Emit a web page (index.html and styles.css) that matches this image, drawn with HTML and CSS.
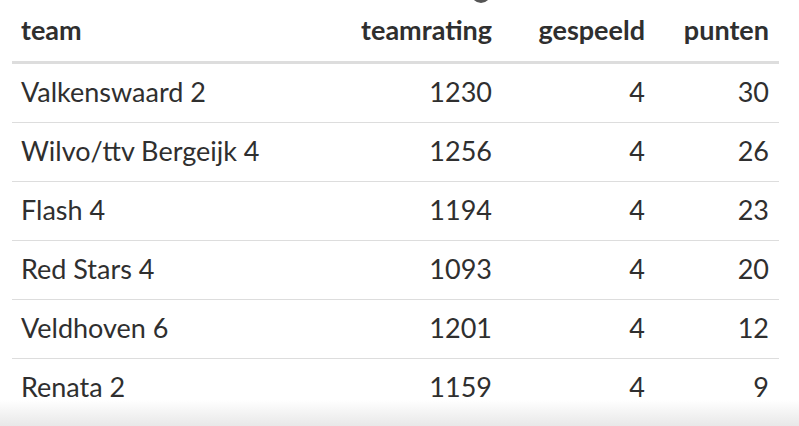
FILE: index.html
```html
<!DOCTYPE html>
<html lang="nl">
<head>
<meta charset="utf-8">
<title>Stand</title>
<link rel="stylesheet" href="styles.css">
</head>
<body>
<div class="page">
  <span class="dot"></span>
  <table class="standings">
    <colgroup>
      <col class="c-team"><col class="c-rating"><col class="c-played"><col class="c-points">
    </colgroup>
    <thead>
      <tr><th class="left">team</th><th>teamrating</th><th>gespeeld</th><th>punten</th></tr>
    </thead>
    <tbody>
      <tr><td class="left">Valkenswaard 2</td><td>1230</td><td>4</td><td>30</td></tr>
      <tr><td class="left">Wilvo/ttv Bergeijk 4</td><td>1256</td><td>4</td><td>26</td></tr>
      <tr><td class="left">Flash 4</td><td>1194</td><td>4</td><td>23</td></tr>
      <tr><td class="left">Red Stars 4</td><td>1093</td><td>4</td><td>20</td></tr>
      <tr><td class="left">Veldhoven 6</td><td>1201</td><td>4</td><td>12</td></tr>
      <tr><td class="left">Renata 2</td><td>1159</td><td>4</td><td>9</td></tr>
    </tbody>
  </table>
  <div class="fade"></div>
</div>
</body>
</html>
```
FILE: styles.css
```css
html, body {
  margin: 0;
  padding: 0;
  background: #fff;
}
.page {
  position: relative;
  width: 799px;
  height: 426px;
  overflow: hidden;
  font-family: Lato, "Open Sans", sans-serif;
  color: #2f2f2f;
}
.dot {
  position: absolute;
  left: 471px;
  top: -17px;
  width: 20px;
  height: 20px;
  border-radius: 50%;
  background: #555;
}
.standings {
  margin-left: 12px;
  width: 767px;
  border-collapse: collapse;
  table-layout: fixed;
}
.c-team { width: 340px; }
.c-rating { width: 150px; }
.c-played { width: 153px; }
.c-points { width: 124px; }
.standings th,
.standings td {
  text-align: right;
  padding: 0 10px 0 9px;
  white-space: nowrap;
  line-height: 1.2;
}
.standings th {
  height: 62px;
  font-size: 27px;
  font-weight: 700;
  border-bottom: 3px solid #ddd;
  vertical-align: middle;
  padding-bottom: 1px;
  box-sizing: border-box;
}
.standings td {
  height: 58px;
  font-size: 27px;
  font-weight: 400;
  border-bottom: 1px solid #ddd;
}
.standings tbody tr:last-child td {
  border-bottom: none;
}
.standings .left {
  text-align: left;
}
.fade {
  position: absolute;
  left: 0;
  right: 0;
  bottom: 0;
  height: 26px;
  background: linear-gradient(to bottom, rgba(232,232,232,0), #e8e8e8);
}
```
